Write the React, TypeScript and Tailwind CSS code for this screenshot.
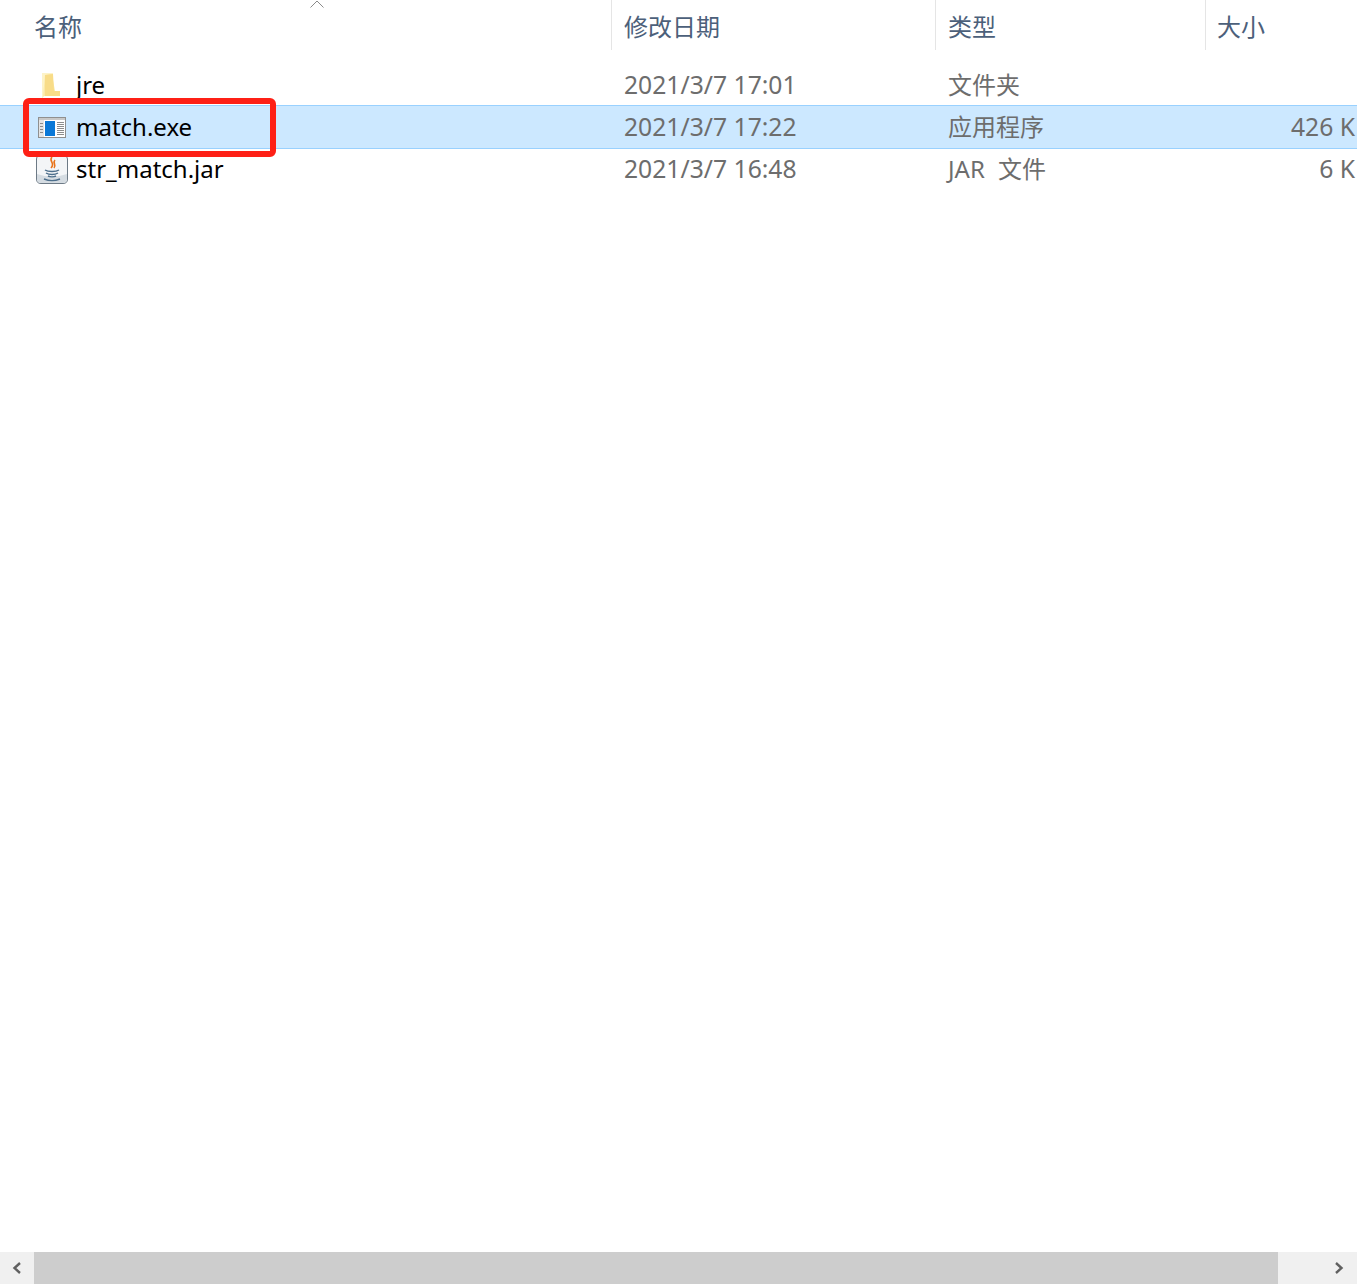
const font = 'font-["Noto_Sans","Noto_Sans_CJK_SC",sans-serif]';

function FolderIcon() {
  return (
    <svg className="mr-[3px]" width="20" height="26" viewBox="0 0 20 26">
      <path d="M1 1 L12 1 L12 8 L14 19 L19 19 L19 24 L3 24 L1 26 Z" fill="#fbe9a6" />
      <path d="M1 1 L12 1 L12 2 L4 3 L2 25 L1 26 Z" fill="#fdf3c8" />
      <path d="M4 3 L12 2 L13 19 L19 19 L19 24 L4 24 Z" fill="#f8dc88" />
    </svg>
  );
}

function ExeIcon() {
  return (
    <svg width="28" height="21" viewBox="0 0 28 21">
      <rect x="0.5" y="0.5" width="27" height="20" fill="#fff" stroke="#8f8f8f" />
      <rect x="1" y="1" width="26" height="2" fill="#c8c8c8" />
      <rect x="1" y="3" width="5" height="17" fill="#e4e4e4" />
      <rect x="7" y="4" width="10" height="15" fill="#0a78d7" />
      <path d="M2 6.5h3M2 9.5h3M2 12.5h3M2 15.5h3M19 5.5h7M19 7.5h7M19 9.5h7M19 11.5h7M19 13.5h7M19 15.5h7M19 17.5h7" stroke="#8c8c8c" />
    </svg>
  );
}

function JarIcon() {
  return (
    <svg width="32" height="29" viewBox="0 0 32 29">
      <path d="M3 0.5 H28 Q31.5 0.5 31.5 4 V24 Q31.5 28.5 27 28.5 H5 Q0.5 28.5 0.5 24 V4 Q0.5 0.5 3 0.5 Z" fill="#f3f5f7" stroke="#6d7a86" />
      <path d="M1 19 Q16 24 31 19 V24 Q31 28 27 28 H5 Q1 28 1 24 Z" fill="#d5dce2" />
      <path d="M16 2 C12 6 20 8 15 13 M19 5 C16 8 21 10 18 13" fill="none" stroke="#e8731a" strokeWidth="1.6" />
      <path d="M9 15 C12 17 20 17 23 15 M10 18 C13 20 19 20 22 18 M12 21 C14 22 18 22 20 21 M8 24 C13 26 19 26 24 24" fill="none" stroke="#4d6f8c" strokeWidth="1.4" />
    </svg>
  );
}

type RowProps = {
  icon: React.ReactNode;
  name: string;
  date: string;
  type: string;
  size: string;
  selected?: boolean;
};

function Row({ icon, name, date, type, size, selected }: RowProps) {
  return (
    <div className={`flex h-[44px] items-center border-y ${selected ? 'border-[#99d1ff] bg-[#cce8ff]' : 'border-transparent'} -mb-[2px]`}>
      <div className="flex w-[624px] items-center">
        <div className="flex w-[76px] justify-center pl-[30px] pr-[2px]">{icon}</div>
        <span className="text-[24px] leading-none text-black">{name}</span>
      </div>
      <div className="w-[324px] text-[24.7px] leading-none text-[#6d6d6d]">{date}</div>
      <div className="w-[269px] text-[24px] leading-none text-[#6d6d6d] [word-spacing:7px]">{type}</div>
      <div className="flex-1 pr-[2px] text-right text-[24.7px] leading-none text-[#6d6d6d]">{size}</div>
    </div>
  );
}

function HeaderCell({ label, className }: { label: string; className: string }) {
  return (
    <div className={`flex h-[50px] items-center pt-[3px] text-[24px] leading-none text-[#4c607a] ${className}`}>
      {label}
    </div>
  );
}

export default function App() {
  return (
    <div className={`relative flex h-[1285px] flex-col overflow-hidden bg-white ${font}`}>
      <div className="flex">
        <HeaderCell label="名称" className="w-[611px] pl-[34px]" />
        <HeaderCell label="修改日期" className="w-[324px] border-l border-[#e5e5e5] pl-[12px]" />
        <HeaderCell label="类型" className="w-[270px] border-l border-[#e5e5e5] pl-[12px]" />
        <HeaderCell label="大小" className="flex-1 border-l border-[#e5e5e5] pl-[11px]" />
      </div>
      <svg className="absolute left-[309px] top-0" width="16" height="9" viewBox="0 0 16 9">
        <path d="M1.5 7.5 L8 1 L14.5 7.5" fill="none" stroke="#8a8a8a" strokeWidth="1" />
      </svg>

      <div className="flex-1 pt-[13px]">
        <Row icon={<FolderIcon />} name="jre" date="2021/3/7 17:01" type="文件夹" size="" />
        <Row icon={<ExeIcon />} name="match.exe" date="2021/3/7 17:22" type="应用程序" size="426 K" selected />
        <Row icon={<JarIcon />} name="str_match.jar" date="2021/3/7 16:48" type="JAR 文件" size="6 K" />
      </div>

      <div className="absolute left-[23px] top-[98px] h-[59px] w-[253px] rounded-[6px] border-[6px] border-[#fe2016]" />

      <div className="mb-px flex h-[32px] bg-[#f0f0f0]">
        <div className="flex w-[34px] items-center justify-center">
          <svg width="10" height="12" viewBox="0 0 10 12">
            <path d="M8 1 L2.5 6 L8 11" fill="none" stroke="#606060" strokeWidth="2.4" />
          </svg>
        </div>
        <div className="w-[1244px] bg-[#cdcdcd]" />
        <div className="flex flex-1 items-center justify-end pr-[13px]">
          <svg width="10" height="12" viewBox="0 0 10 12">
            <path d="M2 1 L7.5 6 L2 11" fill="none" stroke="#606060" strokeWidth="2.4" />
          </svg>
        </div>
      </div>
    </div>
  );
}
